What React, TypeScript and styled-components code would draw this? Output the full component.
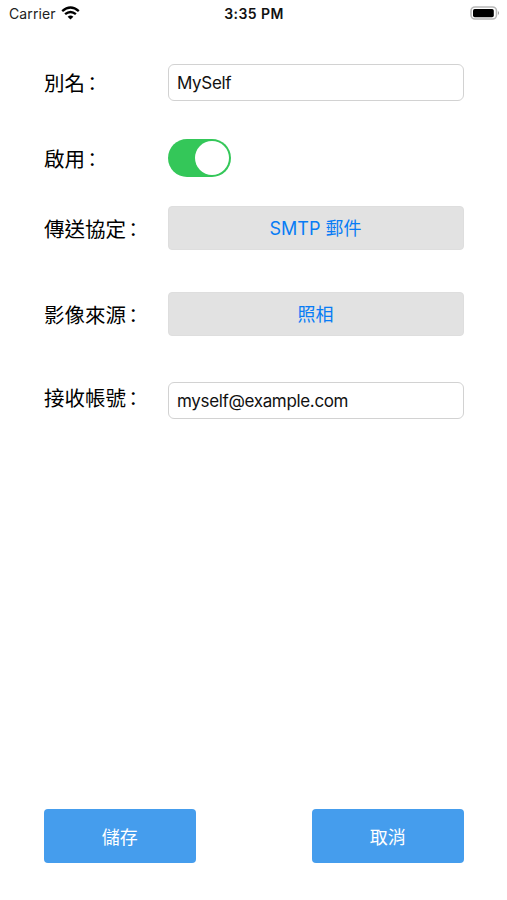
import React from "react";
import styled, { createGlobalStyle } from "styled-components";

const Global = createGlobalStyle`
  * { box-sizing: border-box; }
  body { margin: 0; background: #fff; }
`;
const Screen = styled.main`
  width: 507px; height: 900px; display: flex; flex-direction: column;
  background: #fff; color: #000;
  font-family: Inter, "Noto Sans CJK TC", sans-serif;
`;
const StatusBar = styled.header`
  height: 28px; padding: 0 7px 2px 9px; display: grid;
  grid-template-columns: 1fr auto 1fr; align-items: center; font-size: 14px;
`;
const Carrier = styled.div`display: flex; align-items: center; gap: 5px; letter-spacing: .12px; color: #222;`;
const Time = styled.div`font-weight: 600; letter-spacing: .45px; padding-right: 1px; color: #111;`;
const Battery = styled.div`justify-self: end; display: flex;`;
const Form = styled.form`display: flex; flex-direction: column; flex: 1; padding: 0 43px;`;
const Row = styled.div<{ $top: number; $height: number }>`
  display: flex; align-items: center; margin-top: ${p => p.$top}px; height: ${p => p.$height}px;
`;
const LabelText = styled.label<{ $lift?: number }>`
  width: 125px; padding-left: 1px; padding-bottom: ${p => (p.$lift ?? 0) + 1}px;
  font: 20.5px/30px "Noto Sans CJK TC", sans-serif; white-space: nowrap; flex: none;
`;
const Colon = styled.span`
  font-family: "Noto Sans CJK SC", sans-serif; font-size: 19px; line-height: 1;
  display: inline-block; margin-left: 2.5px; transform: translateY(-1px);
`;
const Field = styled.input`
  width: 296px; height: 37px; border: 1px solid #d2d2d2; border-radius: 6px;
  padding: 0 8px; font: 17px Inter, sans-serif; letter-spacing: -.34px;
  color: #111; background: #fff; outline: none;
`;
const Toggle = styled.button`
  width: 63px; height: 38px; border: 0; border-radius: 19px; padding: 2px;
  background: #34c759; display: flex; justify-content: flex-end;
`;
const Knob = styled.span`width: 34px; height: 34px; border-radius: 50%; background: #fff;`;
const Choice = styled.button`
  width: 297px; height: 44px; border: 1px solid #dedede; border-radius: 4px;
  background: #e2e2e2; color: #087cf5; font: 18px Inter, "Noto Sans CJK TC", sans-serif; padding: 0 1px 2px 0;
`;
const Actions = styled.footer`display: flex; justify-content: space-between; margin-top: auto; padding: 0 0 37px .5px;`;
const Action = styled.button`
  width: 152.5px; height: 54px; border: 0; border-radius: 4px; background: #459ded;
  color: #fff; font: 18px "Noto Sans CJK TC", sans-serif; padding: 0 0 1px;
`;

function Label({ text, lift }: { text: string; lift?: number }) {
  return <LabelText $lift={lift}>{text}<Colon lang="zh-Hans">：</Colon></LabelText>;
}

export default function App() {
  return <><Global /><Screen lang="zh-Hant">
    <StatusBar>
      <Carrier>Carrier
        <svg width="19" height="14" viewBox="0 0 19 14"><path d="M9.5 13.5 6.6 10.7Q9.5 8.5 12.4 10.7Z" fill="#000"/><path d="M1.2 5.1Q9.5-2 17.8 5.1M4.1 8.2Q9.5 3.7 14.9 8.2" fill="none" stroke="#000" strokeWidth="2.4"/></svg>
      </Carrier>
      <Time>3:35 PM</Time>
      <Battery><svg width="30" height="14" viewBox="0 0 30 14"><rect x="1" y="1" width="25.5" height="12" rx="4" fill="none" stroke="#b8b8b8" strokeWidth="1.6"/><rect x="3" y="3" width="20.8" height="8.3" rx="1.7"/><path d="M28 5Q30 7 28 9Z" fill="#999"/></svg></Battery>
    </StatusBar>
    <Form onSubmit={e => e.preventDefault()}>
      <Row $top={36} $height={37}><Label text="別名" /><Field defaultValue="MySelf" /></Row>
      <Row $top={38} $height={38}><Label text="啟用" /><Toggle type="button"><Knob /></Toggle></Row>
      <Row $top={29} $height={44}><Label text="傳送協定" /><Choice type="button">SMTP 郵件</Choice></Row>
      <Row $top={42} $height={44}><Label text="影像來源" /><Choice type="button">照相</Choice></Row>
      <Row $top={46} $height={37}><Label text="接收帳號" lift={7} /><Field defaultValue="myself@example.com" /></Row>
      <Actions><Action type="submit">儲存</Action><Action type="button">取消</Action></Actions>
    </Form>
  </Screen></>;
}
